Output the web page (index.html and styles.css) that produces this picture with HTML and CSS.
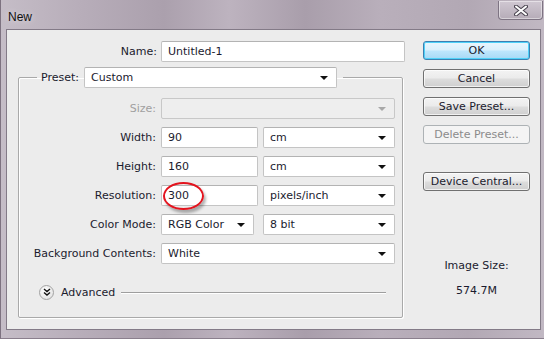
FILE: index.html
```html
<!DOCTYPE html>
<html lang="en">
<head>
    <meta charset="UTF-8">
    <title>New</title>
    <link rel="stylesheet" href="styles.css">
</head>
<body>
    <div class="window">
        <div class="titlebar">
            <span class="title">New</span>
            <div class="close">
                <svg width="14" height="11" viewBox="0 0 14 11">
                    <path d="M2 1.5 L12 9.5 M12 1.5 L2 9.5" stroke="#4a4450" stroke-width="4" stroke-linecap="round"/>
                    <path d="M2 1.5 L12 9.5 M12 1.5 L2 9.5" stroke="#fff" stroke-width="2" stroke-linecap="round"/>
                </svg>
            </div>
        </div>
        <div class="client">
            <div class="main">
                <div class="name-row">
                    <span class="label">Name:</span>
                    <div class="field">Untitled-1</div>
                </div>
                <fieldset class="preset">
                    <legend>
                        <span class="legend-label">Preset:</span>
                        <div class="field select preset-select">Custom<span class="arrow"></span></div>
                    </legend>
                    <div class="grid">
                        <span class="label disabled">Size:</span>
                        <div class="field select span2 off"><span class="arrow"></span></div>

                        <span class="label">Width:</span>
                        <div class="field">90</div>
                        <div class="field select">cm<span class="arrow"></span></div>

                        <span class="label">Height:</span>
                        <div class="field">160</div>
                        <div class="field select">cm<span class="arrow"></span></div>

                        <span class="label">Resolution:</span>
                        <div class="field mark">300<span class="ring"></span></div>
                        <div class="field select">pixels/inch<span class="arrow"></span></div>

                        <span class="label">Color Mode:</span>
                        <div class="field select short">RGB Color<span class="arrow"></span></div>
                        <div class="field select">8 bit<span class="arrow"></span></div>

                        <span class="label">Background Contents:</span>
                        <div class="field select span2">White<span class="arrow"></span></div>
                    </div>
                    <div class="advanced">
                        <span class="expander">
                            <svg width="8" height="8" viewBox="0 0 8 8">
                                <path d="M1 1 L4 3.5 L7 1 M1 4.5 L4 7 L7 4.5" stroke="#111" stroke-width="1.4" fill="none"/>
                            </svg>
                        </span>
                        <span class="adv-text">Advanced</span>
                        <span class="rule"></span>
                    </div>
                </fieldset>
            </div>
            <div class="side">
                <div class="btn default">OK</div>
                <div class="btn">Cancel</div>
                <div class="btn">Save Preset...</div>
                <div class="btn disabled-btn">Delete Preset...</div>
                <div class="btn device">Device Central...</div>
                <div class="size-title">Image Size:</div>
                <div class="size-value">574.7M</div>
            </div>
        </div>
    </div>
</body>
</html>
```

FILE: styles.css
```css
body {
    margin: 0;
    font-family: "DejaVu Sans", sans-serif;
    font-size: 11px;
    color: #1b1b2e;
}
.window {
    width: 544px;
    height: 339px;
    box-sizing: border-box;
    padding: 0 3px 0 5px;
    background: linear-gradient(90deg, #c5bdc7 0%, #b8aeba 14%, #aba0ad 30%, #bdb3bf 42%, #a99eab 56%, #b9afbb 70%, #b2a8b4 86%, #c1b8c3 100%);
    border-left: 1px solid #7d7280;
    border-bottom: 1px solid #8a7f8d;
    overflow: hidden;
}
.titlebar {
    height: 29px;
    display: flex;
    align-items: flex-start;
    justify-content: space-between;
    margin-left: -4px;
}
.title {
    font-family: "Liberation Sans", sans-serif;
    font-size: 12px;
    color: #111;
    margin: 10px 0 0 6px;
    text-shadow: 0 0 6px rgba(255, 255, 255, 0.6);
}
.close {
    width: 43px;
    height: 18px;
    margin: 1px -2px 0 0;
    border: 1px solid #7e7483;
    border-top: none;
    border-radius: 0 0 4px 4px;
    background: linear-gradient(#d0c8d2, #b6acb8);
    box-shadow: inset 0 0 0 1px rgba(255, 255, 255, 0.45);
    display: flex;
    align-items: center;
    justify-content: center;
}
.client {
    height: 301px;
    box-sizing: border-box;
    background: #ececec;
    border: 1px solid #837a87;
    display: flex;
}
.main {
    width: 387px;
    padding: 11px 0 0 11px;
}
.name-row {
    display: flex;
    align-items: center;
}
.label {
    text-align: right;
    white-space: nowrap;
}
.name-row .label {
    width: 139px;
    margin-right: 4px;
}
.field {
    position: relative;
    height: 21px;
    line-height: 20px;
    box-sizing: border-box;
    background: #fff;
    border: 1px solid #c4c4c4;
    border-top-color: #b3b3b3;
    border-radius: 2px;
    padding-left: 6px;
    white-space: nowrap;
}
.name-row .field {
    width: 244px;
}
.arrow {
    position: absolute;
    right: 8px;
    top: 8px;
    border-left: 4px solid transparent;
    border-right: 4px solid transparent;
    border-top: 4px solid #111;
}
.preset {
    width: 385px;
    box-sizing: border-box;
    margin: 5px 0 0;
    padding: 0 7px 17px 0;
    border: 1px solid #a9a9a9;
    border-radius: 2px;
    box-shadow: 1px 1px 0 #fff, inset 1px 1px 0 #fff;
}
.preset legend {
    display: flex;
    align-items: center;
    margin-left: 18px;
    padding: 0 6px 0 4px;
}
.legend-label {
    margin-right: 5px;
}
.preset-select {
    width: 253px;
}
.grid {
    display: grid;
    grid-template-columns: 137px 97px 132px;
    grid-auto-rows: 21px;
    column-gap: 5px;
    row-gap: 8px;
    align-items: center;
    padding-top: 10px;
}
.span2 {
    grid-column: span 2;
}
.short {
    width: 93px;
}
.disabled {
    color: #a0a0a0;
}
.off {
    background: #eeeeee;
    border-color: #c8c8c8;
}
.off .arrow {
    border-top-color: #a8a8a8;
}
.ring {
    position: absolute;
    left: 1px;
    top: -4px;
    width: 41px;
    height: 28px;
    box-sizing: border-box;
    border: 2px solid #e3141e;
    border-radius: 50%;
    box-shadow: 2px 3px 3px rgba(0, 0, 0, 0.3);
}
.advanced {
    display: flex;
    align-items: center;
    margin: 20px 0 0 20px;
    height: 16px;
}
.expander {
    width: 15px;
    height: 15px;
    box-sizing: border-box;
    border: 1px solid #a3a3a3;
    border-radius: 50%;
    background: radial-gradient(circle at 40% 35%, #ffffff, #dcdcdc);
    display: flex;
    align-items: center;
    justify-content: center;
}
.adv-text {
    margin-left: 7px;
}
.rule {
    flex: 1;
    height: 1px;
    margin: 1px 9px 0 6px;
    background: #9e9e9e;
    box-shadow: 0 1px 0 #fff;
}
.side {
    width: 107px;
    margin-left: 18px;
    padding-top: 11px;
    display: flex;
    flex-direction: column;
    align-items: center;
}
.btn {
    width: 107px;
    height: 19px;
    box-sizing: border-box;
    margin-bottom: 9px;
    border: 1px solid #707070;
    border-radius: 3px;
    background: linear-gradient(#f3f3f3 0%, #ebebeb 48%, #dddddd 52%, #cfcfcf 100%);
    box-shadow: inset 0 0 0 1px rgba(255, 255, 255, 0.7);
    text-align: center;
    line-height: 17px;
}
.default {
    border-color: #3c7fb1;
    background: linear-gradient(#eaf6fd 0%, #d9f0fc 48%, #bee6fd 52%, #a7d9f5 100%);
    box-shadow: inset 0 0 0 1px #4fd1f8;
}
.disabled-btn {
    border-color: #adb2b5;
    background: #f4f4f4;
    color: #8b8b8b;
    box-shadow: none;
}
.device {
    margin-top: 19px;
}
.size-title {
    margin-top: 59px;
    line-height: 13px;
}
.size-value {
    margin-top: 12px;
    line-height: 13px;
}
```
